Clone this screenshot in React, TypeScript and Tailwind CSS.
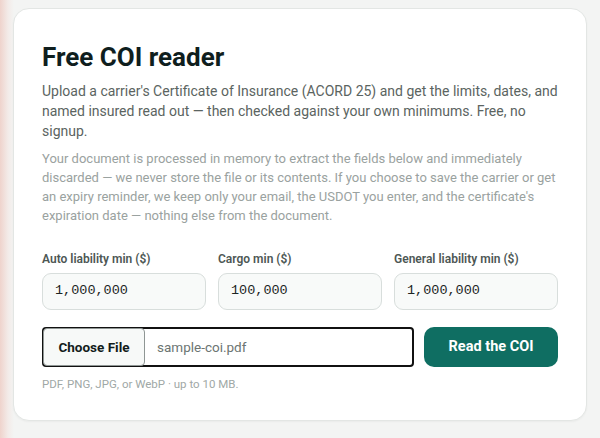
export default function App() {
  const font = { fontFamily: 'Roboto, "Noto Sans", sans-serif' };
  return (
    <div
      className="min-h-screen w-full bg-[#f3f4f3] bg-[linear-gradient(to_right,#efd3cc_0px,#f3ebe8_8px,#f3f4f3_14px)] pt-2 pl-[13px] pr-[13px]"
      style={font}
    >
      <div className="w-[574px] rounded-[16px] border border-[#e3e6e4] bg-white px-[28px] pt-[32px] pb-[29px] shadow-[0_1px_2px_rgba(0,0,0,0.04)]">
        <h1 className="text-[26px] font-bold leading-[32px] text-[#0f1e1e]">
          Free COI reader
        </h1>
        <p className="mt-[8px] text-[14px] leading-[20px] text-[#5b6461]">
          Upload a carrier's Certificate of Insurance (ACORD 25) and get the limits, dates, and named insured read out — then checked against your own minimums. Free, no signup.
        </p>
        <p className="mt-[8px] text-[13px] leading-[19px] text-[#9aa2a0]">
          Your document is processed in memory to extract the fields below and immediately discarded — we never store the file or its contents. If you choose to save the carrier or get an expiry reminder, we keep only your email, the USDOT you enter, and the certificate's expiration date — nothing else from the document.
        </p>
        <div className="mt-[26px] grid grid-cols-3 gap-[12px]">
          {[
            ["Auto liability min ($)", "1,000,000"],
            ["Cargo min ($)", "100,000"],
            ["General liability min ($)", "1,000,000"],
          ].map(([label, value]) => (
            <div key={label} className="flex flex-col">
              <label className="text-[12px] font-semibold leading-[16px] text-[#4d5754]">{label}</label>
              <div
                className="mt-[6px] flex h-[37px] items-center rounded-[9px] border border-[#d8dedc] bg-[#f8faf9] px-[12px] text-[13.5px] text-[#1c2524]"
                style={{ fontFamily: '"Liberation Mono", "DejaVu Sans Mono", monospace' }}
              >
                {value}
              </div>
            </div>
          ))}
        </div>
        <div className="mt-[17px] flex gap-[10px]">
          <div className="flex h-[40px] flex-1 items-stretch rounded-[4px] border-2 border-[#111111] bg-white">
            <div className="-my-[1px] -ml-[1px] flex w-[102px] items-center justify-center rounded-[4px] border border-[#8f9694] bg-[#f7f9f8] text-[13.5px] font-bold text-[#121c1b]">
              Choose File
            </div>
            <div className="flex items-center pl-[12px] text-[13.5px] text-[#6c7572]">sample-coi.pdf</div>
          </div>
          <button className="h-[40px] w-[134px] rounded-[10px] bg-[#0f6e62] text-[14.5px] font-bold text-white">
            Read the COI
          </button>
        </div>
        <p className="mt-[10px] text-[11.5px] leading-[14px] text-[#a0a8a6]">
          PDF, PNG, JPG, or WebP · up to 10 MB.
        </p>
      </div>
    </div>
  );
}
